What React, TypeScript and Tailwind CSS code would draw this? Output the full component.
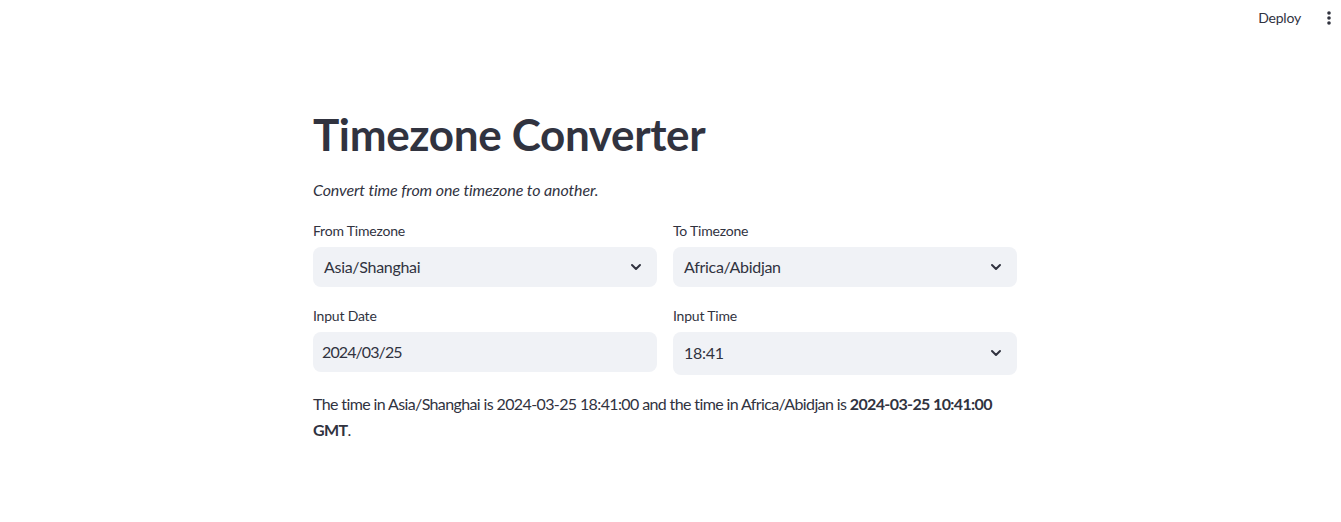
import { ChevronDown } from "lucide-react";

const font = { fontFamily: "Lato, 'Noto Sans', sans-serif" };

function Select({ value, tall }: { value: string; tall?: boolean }) {
  return (
    <div
      className={`flex items-center justify-between rounded-lg bg-[#f0f2f6] pl-[11px] pr-[13px] ${
        tall ? "h-[43px]" : "h-[40px]"
      }`}
    >
      <span className="text-base tracking-[-0.3px] text-[#31333f]">{value}</span>
      <ChevronDown className="h-[16px] w-[16px] text-[#31333f]" strokeWidth={3} />
    </div>
  );
}

export default function App() {
  return (
    <div className="relative min-h-[522px] w-full bg-white text-[#31333f]" style={font}>
      <header className="flex h-[36px] items-center justify-end gap-[20px] pr-[4px]">
        <span className="text-sm tracking-[-0.2px] text-[#31333f]">Deploy</span>
        <svg width="16" height="16" viewBox="0 0 16 16" fill="#31333f">
          <circle cx="8" cy="3" r="1.8" />
          <circle cx="8" cy="8" r="1.8" />
          <circle cx="8" cy="13" r="1.8" />
        </svg>
      </header>

      <main className="ml-[313px] w-[704px] pt-[72px]">
        <h1 className="text-[44px] font-bold leading-[1.2] tracking-[-0.35px]">Timezone Converter</h1>
        <p className="mt-[17px] text-base italic tracking-[-0.1px]">Convert time from one timezone to another.</p>

        <div className="mt-[19px] grid grid-cols-2 gap-x-4">
          <div>
            <label className="block text-sm leading-[20px] tracking-[-0.2px]">From Timezone</label>
            <div className="mt-[6px]">
              <Select value="Asia/Shanghai" />
            </div>
          </div>
          <div>
            <label className="block text-sm leading-[20px] tracking-[-0.2px]">To Timezone</label>
            <div className="mt-[6px]">
              <Select value="Africa/Abidjan" />
            </div>
          </div>
        </div>

        <div className="mt-[19px] grid grid-cols-2 gap-x-4">
          <div>
            <label className="block text-sm leading-[20px] tracking-[-0.2px]">Input Date</label>
            <div className="mt-[6px] flex h-[40px] items-center rounded-lg bg-[#f0f2f6] pl-[9px]">
              <span className="text-base tracking-[-0.9px]">2024/03/25</span>
            </div>
          </div>
          <div>
            <label className="block text-sm leading-[20px] tracking-[-0.2px]">Input Time</label>
            <div className="mt-[6px]">
              <Select value="18:41" tall />
            </div>
          </div>
        </div>

        <p className="mt-[16px] text-base leading-[26px] tracking-[-0.62px]">
          The time in Asia/Shanghai is 2024-03-25 18:41:00 and the time in Africa/Abidjan is{" "}
          <strong className="font-bold">2024-03-25 10:41:00 GMT</strong>.
        </p>
      </main>
    </div>
  );
}
